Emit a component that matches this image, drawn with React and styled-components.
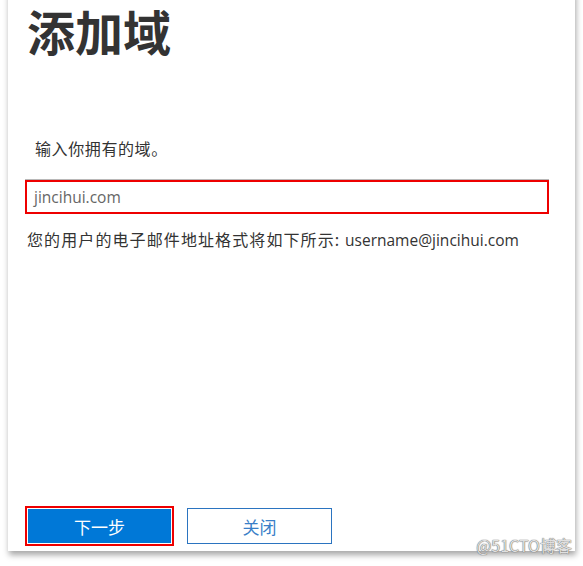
import React from 'react';
import styled, { createGlobalStyle } from 'styled-components';

const GlobalStyle = createGlobalStyle`
  html, body {
    margin: 0;
    padding: 0;
    background: #ffffff;
  }
  body {
    font-family: "Noto Sans CJK SC", "Noto Sans", sans-serif;
    color: #333333;
  }
`;

const Page = styled.div`
  width: 583px;
  height: 566px;
  position: relative;
  overflow: hidden;
`;

const Card = styled.div`
  margin: -10px 0 0 8px;
  width: 567px;
  height: 561px;
  background: #ffffff;
  box-shadow: 1px 4px 6px rgba(0, 0, 0, 0.35);
  padding: 10px 0 0 17px;
  box-sizing: border-box;
  display: flex;
  flex-direction: column;
`;

const Title = styled.h1`
  margin: 0;
  font-size: 48px;
  line-height: 60px;
  font-weight: 700;
  color: #333333;
  margin-left: 2px;
`;

const Label = styled.div`
  margin: 77px 0 0 10px;
  font-size: 16px;
  line-height: 22px;
  letter-spacing: 0.6px;
  color: #333333;
`;

const InputWrap = styled.div`
  margin-top: 20px;
  width: 524px;
  height: 35px;
  border-top: 1px solid #b8b8b8;
  box-sizing: border-box;
`;

const Highlight = styled.div`
  height: 34px;
  border: 2px solid #ee0000;
  box-sizing: border-box;
  display: flex;
  align-items: center;
  padding-left: 7px;
  font-family: "Open Sans", "Noto Sans", sans-serif;
  font-size: 15.5px;
  color: #666666;
`;

const Hint = styled.div`
  margin: 15px 0 0 2px;
  font-size: 16px;
  line-height: 20px;
  letter-spacing: 1.1px;
  color: #333333;
  white-space: nowrap;
`;

const Mail = styled.span`
  font-family: "Open Sans", "Noto Sans", sans-serif;
  letter-spacing: 0;
  font-size: 15.5px;
`;

const Footer = styled.div`
  margin-top: auto;
  margin-bottom: 5px;
  display: flex;
  align-items: center;
  gap: 13px;
`;

const Annot = styled.div`
  border: 2px solid #ee0000;
  padding: 1px;
  display: flex;
`;

const Button = styled.button`
  width: 143px;
  height: 34px;
  border: 1px solid #0078d4;
  background: ${p => (p.primary ? '#0078d7' : '#ffffff')};
  color: ${p => (p.primary ? '#ffffff' : '#0078d4')};
  font-family: "Noto Sans CJK SC", sans-serif;
  font-size: 17px;
  padding: 0;
  cursor: pointer;
  box-sizing: border-box;
`;

const Outline = styled(Button)`
  width: 145px;
  height: 36px;
  border-color: #2b74c0;
  color: #3a7fc8;
`;

const Watermark = styled.div`
  position: absolute;
  right: 11px;
  bottom: 9px;
  font-family: "Noto Sans CJK SC", sans-serif;
  font-size: 16px;
  color: #e0e0e0;
  text-shadow: 0 0 1px #666, 0 0 1px #666;
`;

export default function App() {
  return (
    <>
      <GlobalStyle />
      <Page>
        <Card>
          <Title>添加域</Title>
          <Label>输入你拥有的域。</Label>
          <InputWrap>
            <Highlight>jincihui.com</Highlight>
          </InputWrap>
          <Hint>
            您的用户的电子邮件地址格式将如下所示: <Mail>username@jincihui.com</Mail>
          </Hint>
          <Footer>
            <Annot>
              <Button primary>下一步</Button>
            </Annot>
            <Outline>关闭</Outline>
          </Footer>
        </Card>
        <Watermark>@51CTO博客</Watermark>
      </Page>
    </>
  );
}
